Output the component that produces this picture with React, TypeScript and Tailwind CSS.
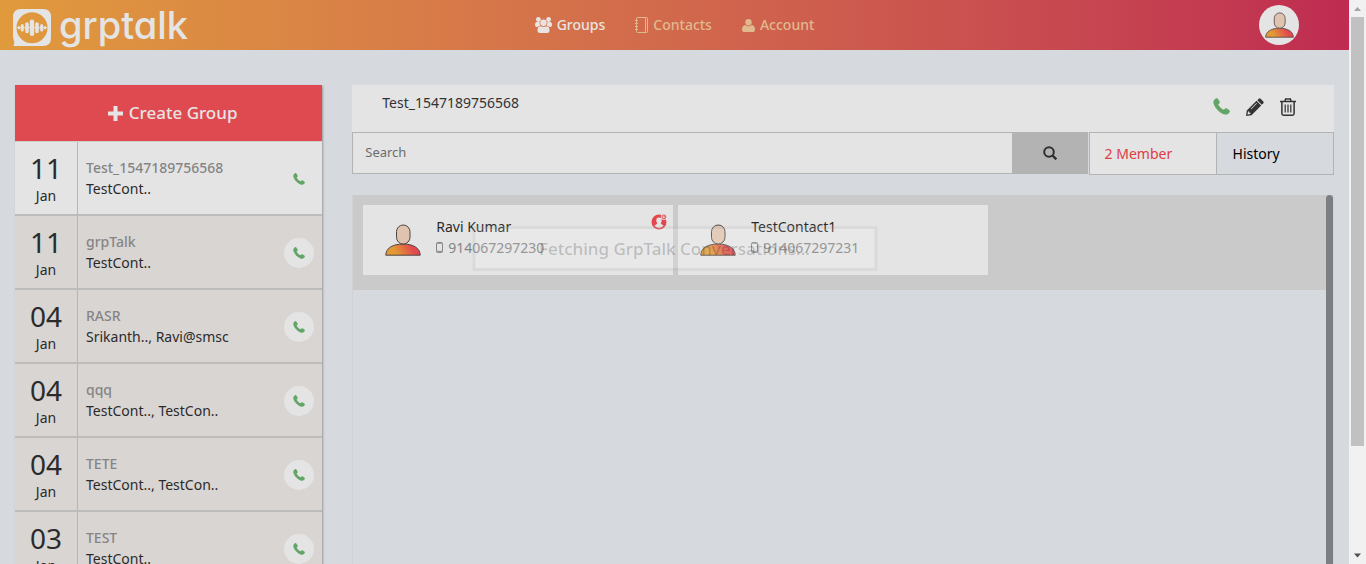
import React from "react";

type IconProps = { className?: string };

const PHONE =
  "M2.2 1.400C3.400.2 4.800-.3 5.500.7L7.900 4.400C8.400 5.200 7.900 6 6.900 6.700L6.100 7.300C7.200 10 10 12.800 12.700 13.900L13.400 13.100C14.200 12.100 15 11.700 15.800 12.200L19.300 14.500C20.300 15.200 19.800 16.600 18.600 17.800C17 19.500 14.800 20 12.300 19C7.200 17 3 12.700 1 7.700C0 5 .4 3 2.200 1.400Z";

function PhoneIcon({ className }: IconProps) {
  return (
    <svg viewBox="0 0 20 20" className={className} fill="currentColor" aria-hidden="true">
      <path d={PHONE} />
    </svg>
  );
}

function Avatar({ className }: IconProps) {
  return (
    <svg viewBox="0 0 36 32" className={className} aria-hidden="true">
      <defs>
        <linearGradient id="shirt" x1="0" y1="0.6" x2="1" y2="0.4">
          <stop offset="0.25" stopColor="#e19a35" />
          <stop offset="0.8" stopColor="#e2484d" />
        </linearGradient>
      </defs>
      <path d="M.8 31.200C.8 24 8 20 18 20S35.200 24 35.200 31.200Z" fill="url(#shirt)" stroke="#4d4644" />
      <rect x="11.500" y="1" width="13.500" height="19" rx="6.700" fill="#e0c3ae" stroke="#4d4644" />
    </svg>
  );
}

function LogoMark({ className }: IconProps) {
  return (
    <svg viewBox="0 0 38 37" className={className} aria-hidden="true">
      <path
        fill="#e4e4e4"
        fillRule="evenodd"
        d="M8 0H30Q38 0 38 8V29Q38 37 30 37H1Q0 37 .8 35.800Q2 34.500 .8 31Q0 29 0 28V8Q0 0 8 0ZM19 3.300A15.500 15.500 0 1 0 19 34.300A15.500 15.500 0 1 0 19 3.300Z"
      />
      <g stroke="#e4e4e4" strokeLinecap="round">
        <path strokeWidth="1" d="M4 18.700H34" />
        <path strokeWidth="2" d="M6 18V19.400M32 18V19.400" />
        <path strokeWidth="3" d="M9.300 16.500V21M28.700 16.500V21" />
        <path strokeWidth="3.600" d="M14 15V22.500M24 15V22.500" />
        <path strokeWidth="4.400" d="M19 12.800V24.700" />
      </g>
    </svg>
  );
}

function GroupsIcon({ className }: IconProps) {
  return (
    <svg viewBox="0 0 17 16" className={className} fill="currentColor" aria-hidden="true">
      <circle cx="3.400" cy="2.500" r="2.400" />
      <circle cx="13.600" cy="2.500" r="2.400" />
      <circle cx="8.500" cy="5.700" r="3.200" />
      <path d="M1.800 5H4.700Q4.300 7.300 5.500 8.800Q3.500 8.800 2.500 10H1.600Q0 10 0 8Q0 5 1.800 5ZM15.200 5H12.300Q12.700 7.300 11.500 8.800Q13.500 8.800 14.500 10H15.400Q17 10 17 8Q17 5 15.200 5ZM5.300 9.200Q8.500 10.500 11.700 9.200Q14.500 9.200 14.500 13.500Q14.500 16 12 16H5Q2.500 16 2.500 13.500Q2.500 9.200 5.300 9.200Z" />
    </svg>
  );
}

function ContactsIcon({ className }: IconProps) {
  return (
    <svg viewBox="0 0 13 16" className={className} fill="none" stroke="currentColor" aria-hidden="true">
      <rect x="1.500" y=".5" width="11" height="15" rx="1" />
      <path d="M10.500 .5V15.500M0 3.500H3M0 6.500H3M0 9.500H3M0 12.500H3" />
    </svg>
  );
}

function AccountIcon({ className }: IconProps) {
  return (
    <svg viewBox="0 0 13 13" className={className} fill="currentColor" aria-hidden="true">
      <circle cx="6.500" cy="3.200" r="3.200" />
      <path d="M3.300 5.900Q6.500 8.700 9.700 5.900Q13 6.400 13 10.800Q13 13 11 13H2Q0 13 0 10.800Q0 6.400 3.300 5.900Z" />
    </svg>
  );
}

function PencilIcon({ className }: IconProps) {
  return (
    <svg viewBox="0 0 18 18" className={className} fill="currentColor" aria-hidden="true">
      <path d="M12.800.7Q13.700-.1 14.600.7L17.300 3.400Q18.100 4.300 17.300 5.200L15.800 6.700L11.300 2.200Z" />
      <path
        fillRule="evenodd"
        d="M10.500 2.800L15.200 7.500L5.500 17.200L0 18L.8 12.500ZM2 13.600L1.500 16.500L4.400 16L4.400 14.800H3.200V13.600ZM4.700 10.700L5.200 11.200L10.900 5.500L10.400 5Z"
      />
    </svg>
  );
}

function TrashIcon({ className }: IconProps) {
  return (
    <svg viewBox="0 0 16 18" className={className} fill="none" stroke="currentColor" strokeWidth="1.500" aria-hidden="true">
      <path d="M0 3.500H16M4.800 3.500L5.600 1H10.400L11.200 3.500M1.900 3.500V15.500Q1.900 17.200 3.500 17.200H12.500Q14.100 17.200 14.100 15.500V3.500" />
      <path strokeWidth="1.200" d="M5.200 6.500V14.500M8 6.500V14.500M10.800 6.500V14.500" />
    </svg>
  );
}

function SearchIcon({ className }: IconProps) {
  return (
    <svg viewBox="0 0 14 14" className={className} fill="none" stroke="currentColor" strokeWidth="2" aria-hidden="true">
      <circle cx="6" cy="6" r="4.800" />
      <path d="M9.500 9.500L13.300 13.300" strokeWidth="2.400" />
    </svg>
  );
}

function AdminBadge({ className }: IconProps) {
  return (
    <svg viewBox="0 0 16 16" className={className} aria-hidden="true">
      <circle cx="8" cy="8" r="7.500" fill="#e2474d" />
      <path d="M8 3.500C10.500 3.500 11 5.500 10.600 7.500L9.800 9.300Q10.300 10.800 12.600 11.600Q10.800 14 8 14T3.400 11.600Q5.700 10.800 6.200 9.300L5.400 7.500C5 5.500 5.500 3.500 8 3.500Z" fill="#e4e4e4" />
      <circle cx="12.800" cy="2.900" r="2.900" fill="#e4e4e4" />
      <circle cx="12.900" cy="2.800" r="1.900" fill="none" stroke="#e2474d" />
      <path d="M12.400 2.300H13.600V3.400" fill="none" stroke="#e2474d" strokeWidth=".7" />
    </svg>
  );
}

const groups = [
  { day: "11", month: "Jan", name: "Test_1547189756568", people: "TestCont.." },
  { day: "11", month: "Jan", name: "grpTalk", people: "TestCont.." },
  { day: "04", month: "Jan", name: "RASR", people: "Srikanth.., Ravi@smsc" },
  { day: "04", month: "Jan", name: "qqq", people: "TestCont.., TestCon.." },
  { day: "04", month: "Jan", name: "TETE", people: "TestCont.., TestCon.." },
  { day: "03", month: "Jan", name: "TEST", people: "TestCont.." },
];

const members = [
  { name: "Ravi Kumar", phone: "914067297230", admin: true },
  { name: "TestContact1", phone: "914067297231", admin: false },
];

function Header() {
  return (
    <header className="grid h-[50px] shrink-0 grid-cols-[1fr_auto_1fr] items-center bg-linear-to-r from-[#e09a3c] to-[#bf2b51]">
      <a href="#home" className="flex items-center gap-2 pt-1 pl-[13px] text-[#e4e4e4]">
        <LogoMark className="h-[37px] w-[38px]" />
        <span className="pb-1 font-[Inter,sans-serif] text-[38px] leading-[42px] font-medium [font-feature-settings:'cv11']">
          grptalk
        </span>
      </a>
      <nav className="flex items-center gap-[30px] text-[14px] leading-5 font-medium text-[#e0b98f]">
        <a href="#groups" className="flex items-center gap-[5px] text-[#e9e4e2]">
          <GroupsIcon className="h-4 w-[17px]" />
          Groups
        </a>
        <a href="#contacts" className="flex items-center gap-[5px]">
          <ContactsIcon className="h-4 w-[13px]" />
          Contacts
        </a>
        <a href="#account" className="flex items-center gap-[5px]">
          <AccountIcon className="size-[13px]" />
          Account
        </a>
      </nav>
      <button type="button" aria-label="Profile" className="mr-[50px] flex size-10 items-center justify-center justify-self-end rounded-full bg-[#e4e4e4]">
        <Avatar className="h-[26px] w-[29px]" />
      </button>
    </header>
  );
}

function Sidebar() {
  return (
    <aside className="w-1/4 shrink-0 px-[15px]">
      <div className="shadow-[1px_1px_2px_#9a9a9a]">
        <button type="button" className="flex h-14 w-full items-center justify-center gap-[6px] bg-[#df4a50] pl-2 text-[17px] font-medium text-[#e8e4e4]">
          <svg viewBox="0 0 15 15" className="size-[15px]" fill="currentColor" aria-hidden="true">
            <path d="M5.500 0H9.500V5.500H15V9.500H9.500V15H5.500V9.500H0V5.500H5.500Z" />
          </svg>
          Create Group
        </button>
        <ul className="border-t border-[#cfcdcd]">
          {groups.map((g, i) => (
            <li
              key={i}
              className={
                "flex h-[74px] border-b-2 border-[#bcbcbc] " + (i === 0 ? "bg-[#e4e4e4]" : "bg-[#d9d5d3]")
              }
            >
              <div className="flex w-[63px] shrink-0 flex-col items-center border-r border-[#b5b5b5] pt-[10px] text-[#2b2b2b]">
                <span className="text-[28px] leading-8">{g.day}</span>
                <span className="text-[14px] leading-6">{g.month}</span>
              </div>
              <div className="flex-1 pt-[15px] pl-2 text-[14px] leading-[21px]">
                <p className="font-medium text-[#858585]">{g.name}</p>
                <p className="text-[#2b2b2b]">{g.people}</p>
              </div>
              <button
                type="button"
                aria-label={"Call " + g.name}
                className="mt-[2px] mr-2 flex size-[30px] items-center justify-center self-center rounded-full bg-[#e4e4e4] text-[#62a566]"
              >
                <PhoneIcon className="size-3" />
              </button>
            </li>
          ))}
        </ul>
      </div>
    </aside>
  );
}

function Details() {
  return (
    <section className="flex min-w-0 flex-1 flex-col px-[15px]">
      <div className="flex h-[47px] shrink-0 items-center justify-between bg-[#e4e4e4] pr-[38px] pb-1 pl-[30px]">
        <h1 className="pb-2 text-[14px] leading-5 text-[#333]">Test_1547189756568</h1>
        <div className="flex items-center gap-4 text-[#333]">
          <button type="button" aria-label="Call group" className="text-[#62a566]">
            <PhoneIcon className="size-[17px]" />
          </button>
          <button type="button" aria-label="Edit group">
            <PencilIcon className="size-[18px]" />
          </button>
          <button type="button" aria-label="Delete group">
            <TrashIcon className="h-[18px] w-4" />
          </button>
        </div>
      </div>
      <div className="flex shrink-0 items-start gap-px">
        <form className="flex h-[42px] flex-1" onSubmit={(e) => e.preventDefault()}>
          <input
            type="search"
            aria-label="Search"
            placeholder="Search"
            className="min-w-0 flex-1 border border-r-0 border-[#b3b3b3] bg-[#e4e4e4] px-3 text-[13px] outline-none placeholder:text-[#6c6c6c]"
          />
          <button type="submit" aria-label="Submit search" className="flex w-[76px] items-center justify-center bg-[#b3b3b3] text-[#2f2f2f]">
            <SearchIcon className="size-[14px]" />
          </button>
        </form>
        <div className="flex h-[43px] w-1/4 border border-[#b3b3b3] text-[14px]">
          <button type="button" className="w-[127px] border-r border-[#b3b3b3] bg-[#e4e4e4] px-[15px] text-left text-[#dd3c43]">
            2 Member
          </button>
          <button type="button" className="flex-1 px-4 text-left text-black">
            History
          </button>
        </div>
      </div>
      <div className="mt-5 flex min-h-0 flex-1 border-x border-[#cfd1d4]">
        <div className="min-w-0 flex-1">
          <ul className="flex gap-[5px] bg-[#cacaca] px-[10px] pt-[10px] pb-[15px]">
            {members.map((m) => (
              <li key={m.phone} className="flex h-[70px] w-[310px] items-center bg-[#e4e4e4] pl-[22px]">
                <Avatar className="h-8 w-9" />
                <div className="ml-[15px] flex-1 pb-[6px] text-[14px] leading-[21px]">
                  <p className="text-[#2b2b2b]">{m.name}</p>
                  <p className="flex items-center gap-[5px] text-[#858585]">
                    <svg viewBox="0 0 7 11" className="h-[11px] w-[7px]" fill="none" stroke="currentColor" aria-hidden="true">
                      <rect x=".5" y=".5" width="6" height="10" rx="1" />
                      <path d="M1 1.200H6M1 9.300H6" />
                    </svg>
                    {m.phone}
                  </p>
                </div>
                {m.admin && <AdminBadge className="mt-[9px] mr-[6px] size-4 self-start" />}
              </li>
            ))}
          </ul>
        </div>
        <div className="-ml-[7px] w-[7px] rounded-t-[4px] bg-[#7c7f81]" />
      </div>
    </section>
  );
}

export default function App() {
  return (
    <div className="flex h-screen overflow-hidden bg-[#d6d9de] font-['Noto_Sans',sans-serif]">
      <div className="relative flex min-w-0 flex-1 flex-col overflow-hidden">
        <Header />
        <main className="flex min-h-0 flex-1 pt-[35px]">
          <Sidebar />
          <Details />
        </main>
        <div
          role="status"
          className="absolute top-[226px] left-1/2 flex h-[45px] w-[405px] -translate-x-1/2 items-center justify-center border-[3px] border-black/6 bg-white/15 text-[17px] font-medium whitespace-nowrap text-black/20"
        >
          Fetching GrpTalk Conversations...
        </div>
      </div>
      <div className="flex w-[17px] shrink-0 flex-col items-center bg-[#f1f1f1]" aria-hidden="true">
        <svg viewBox="0 0 17 17" className="size-[17px]">
          <path d="M5 11L8.500 7L12 11Z" fill="#a3a3a3" />
        </svg>
        <div className="w-[13px] flex-[429] bg-[#c1c1c1]" />
        <div className="flex-[101]" />
        <svg viewBox="0 0 17 17" className="size-[17px]">
          <path d="M5 6.500L8.500 10.500L12 6.500Z" fill="#505050" />
        </svg>
      </div>
    </div>
  );
}
